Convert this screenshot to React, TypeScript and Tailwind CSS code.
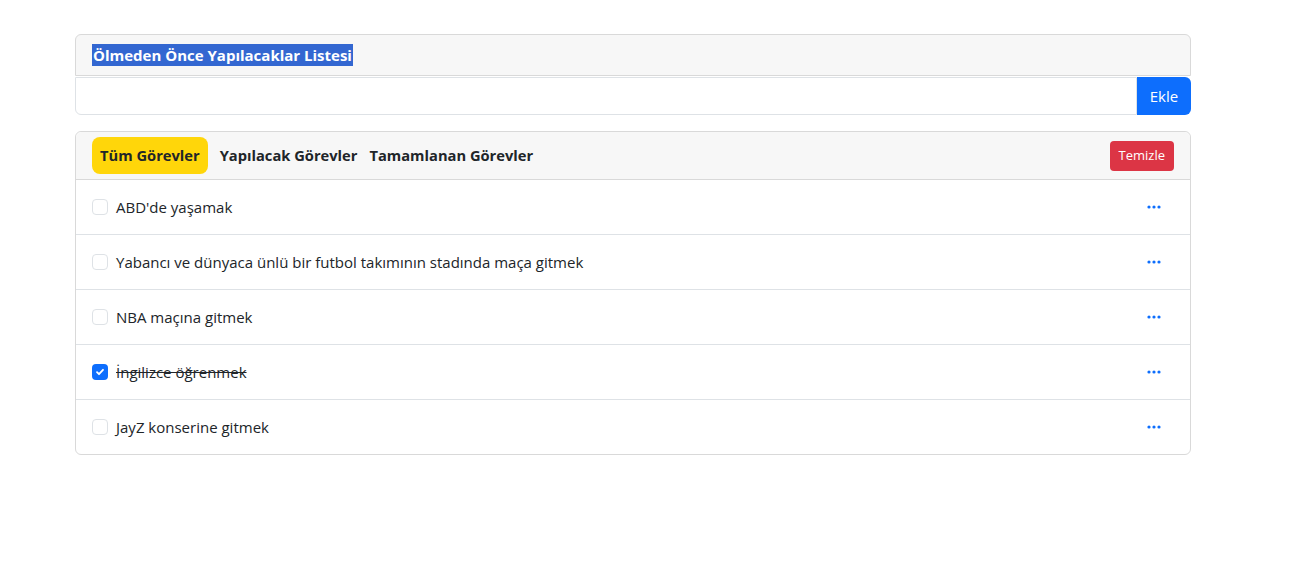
import React from "react";

const tasks = [
  { text: "ABD'de yaşamak", done: false },
  { text: "Yabancı ve dünyaca ünlü bir futbol takımının stadında maça gitmek", done: false },
  { text: "NBA maçına gitmek", done: false },
  { text: "İngilizce öğrenmek", done: true },
  { text: "JayZ konserine gitmek", done: false },
];

function Dots() {
  return (
    <svg width="16" height="16" viewBox="0 0 16 16" fill="#0d6efd">
      <circle cx="3" cy="8" r="1.6" />
      <circle cx="8" cy="8" r="1.6" />
      <circle cx="13" cy="8" r="1.6" />
    </svg>
  );
}

export default function App() {
  return (
    <div className="min-h-screen bg-white text-[#212529] font-['Open_Sans',sans-serif]">
      <div className="w-[1116px] ml-[75px] pt-[34px]">
        {/* Title card */}
        <div className="h-[42px] bg-[#f7f7f7] border border-[#d9d9d9] rounded-t-md flex items-center px-4">
          <h1 className="text-[15px] font-bold leading-[22px] bg-[#3367d1] text-white px-[1px]">
            Ölmeden Önce Yapılacaklar Listesi
          </h1>
        </div>
        <div className="flex h-[38px] mt-[1px]">
          <input className="flex-1 border border-[#dee2e6] rounded-bl-md outline-none px-3" />
          <button className="w-[54px] bg-[#0d6efd] text-white text-[15px] rounded-r-md">Ekle</button>
        </div>

        {/* Task list card */}
        <div className="mt-4 border border-[#d9d9d9] rounded-md">
          <div className="h-[48px] bg-[#f7f7f7] border-b border-[#d9d9d9] rounded-t-md flex items-center pl-4 pr-4">
            <div className="flex items-center gap-[12px] text-[14.7px] font-bold text-[#212529]">
              <span className="bg-[#ffd60a] rounded-lg h-[37px] px-2 flex items-center">Tüm Görevler</span>
              <span>Yapılacak Görevler</span>
              <span>Tamamlanan Görevler</span>
            </div>
            <button className="ml-auto bg-[#dc3545] text-white text-[13px] rounded-[4px] h-[30px] px-[9px]">
              Temizle
            </button>
          </div>
          {tasks.map((t, i) => (
            <div
              key={i}
              className={`flex items-center pl-4 pr-[28px] ${i < tasks.length - 1 ? "h-[55px] border-b border-[#dee2e6]" : "h-[54px]"}`}
            >
              {t.done ? (
                <span className="w-4 h-4 rounded-[4px] bg-[#0d6efd] flex items-center justify-center">
                  <svg width="10" height="10" viewBox="0 0 10 10" fill="none">
                    <path d="M2 5.2l2 2 4-4.4" stroke="white" strokeWidth="1.8" strokeLinecap="round" strokeLinejoin="round" />
                  </svg>
                </span>
              ) : (
                <span className="w-4 h-4 rounded-[4px] border border-[#dee2e6] bg-white" />
              )}
              <span className={`ml-2 text-[15px] leading-[20px] ${t.done ? "line-through" : ""}`}>{t.text}</span>
              <span className="ml-auto">
                <Dots />
              </span>
            </div>
          ))}
        </div>
      </div>
    </div>
  );
}
